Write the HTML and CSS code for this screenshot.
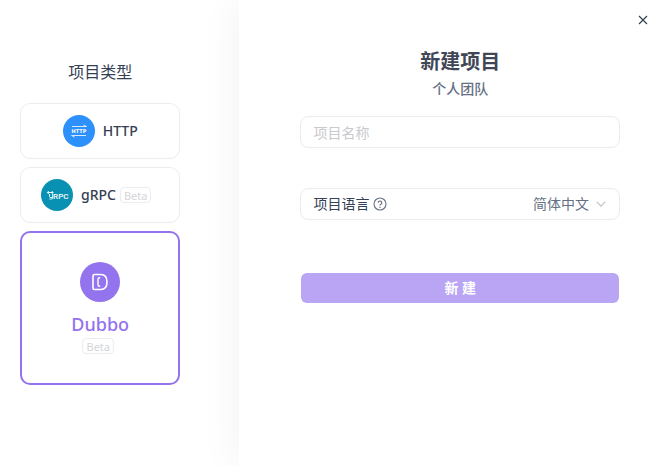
FILE: index.html
```html
<!DOCTYPE html>
<html lang="zh-CN">
<head>
    <meta charset="UTF-8">
    <meta name="viewport" content="width=device-width, initial-scale=1.0">
    <title>新建项目</title>
    <link rel="stylesheet" href="styles.css">
</head>
<body>

    <div class="dialog">
        <!-- Project types -->
        <aside class="sidebar">
            <h2 class="sidebar-title">项目类型</h2>

            <button type="button" class="type-card">
                <svg class="type-icon" viewBox="0 0 32 32" aria-hidden="true">
                    <circle cx="16" cy="16" r="16" fill="#2e90fa"/>
                    <path d="M9 11.500h14.500l-3-1.500M23 20.500H8.500l3 1.500" fill="none" stroke="#d5e9fe" stroke-width="1"/>
                    <text x="16" y="18" text-anchor="middle" class="icon-text">HTTP</text>
                </svg>
                <span class="type-name">HTTP</span>
            </button>

            <button type="button" class="type-card with-beta">
                <svg class="type-icon" viewBox="0 0 32 32" aria-hidden="true">
                    <circle cx="16" cy="16" r="16" fill="#0891b2"/>
                    <path d="M6.500 13.500h5.500M7.800 12L6.300 13.500 7.800 15M10.700 12l1.500 1.500-1.500 1.500M8.500 15v2.500q0 1 1.200 1h1.600M11.600 15v4q0 1-1.200 1H8.500" fill="none" stroke="#fff" stroke-width="0.900"/>
                    <text x="19.800" y="19.500" text-anchor="middle" class="icon-text icon-text-lg">RPC</text>
                </svg>
                <span class="type-name">gRPC <span class="beta">Beta</span></span>
            </button>

            <button type="button" class="type-card active" aria-pressed="true">
                <svg class="type-icon" viewBox="0 0 40 40" aria-hidden="true">
                    <circle cx="20" cy="20" r="20" fill="#9373ee"/>
                    <path d="M14.500 12.500h6.200c4.200 0 6.300 3 6.300 7.500s-2.100 7.500-6.300 7.500h-6.200q-1.500 0-1.500-1.500V14q0-1.500 1.500-1.500z" fill="none" stroke="#fff" stroke-width="1.600"/>
                    <path d="M20.200 15.700h-.5q-1.700 0-1.700 1.500v5.600q0 1.500 1.700 1.500h.5" fill="none" stroke="#fff" stroke-width="1.400"/>
                </svg>
                <span class="type-name">Dubbo</span>
                <span class="beta">Beta</span>
            </button>
        </aside>

        <!-- New project form -->
        <main class="content">
            <button type="button" class="close-btn" aria-label="关闭">
                <svg width="10" height="10" viewBox="0 0 10 10" aria-hidden="true">
                    <path d="M1 1l8 8M9 1L1 9" fill="none" stroke="#344054" stroke-width="1.200"/>
                </svg>
            </button>

            <form class="project-form">
                <h1 class="form-title">新建项目</h1>
                <p class="team-name">个人团队</p>

                <input type="text" class="field name-input" placeholder="项目名称" aria-label="项目名称">

                <div class="field language-field">
                    <label for="language">项目语言</label>
                    <svg class="help-icon" viewBox="0 0 14 14" aria-hidden="true">
                        <circle cx="7" cy="7" r="6" fill="none" stroke="#667085" stroke-width="1.100"/>
                        <path d="M5.200 5.700a1.800 1.700 0 1 1 2.700 1.500q-.9.500-.9 1.300" fill="none" stroke="#667085" stroke-width="1.100"/>
                        <circle cx="7" cy="10.200" r=".7" fill="#667085"/>
                    </svg>
                    <select id="language" class="language-select">
                        <option>简体中文</option>
                    </select>
                    <svg class="arrow-icon" viewBox="0 0 10 10" aria-hidden="true">
                        <path d="M.8 2.800L5 7.200l4.200-4.400" fill="none" stroke="#c0c2c7" stroke-width="1.200"/>
                    </svg>
                </div>

                <button type="button" class="submit-btn">新 建</button>
            </form>
        </main>
    </div>

</body>
</html>
```

FILE: styles.css
```css
/* General Styling */
* {
    box-sizing: border-box;
}

body {
    margin: 0;
    font-family: "Noto Sans", "Noto Sans CJK SC", sans-serif;
    font-size: 14px;
    line-height: 22px;
    color: #344054;
    background: #fff;
}

button, input, select {
    font: inherit;
    color: inherit;
}

h1, h2, p {
    margin: 0;
}

.dialog {
    display: flex;
    min-height: 100vh;
    overflow: hidden;
}

/* Sidebar */
.sidebar {
    flex: 0 0 239px;
    display: flex;
    flex-direction: column;
    gap: 8px;
    padding: 60px 59px 20px 20px;
}

.sidebar-title {
    margin-bottom: 11px;
    font-size: 16px;
    font-weight: 400;
    line-height: 24px;
    text-align: center;
}

.type-card {
    display: flex;
    align-items: center;
    justify-content: center;
    gap: 8px;
    height: 56px;
    padding: 0 20px;
    background: #fff;
    border: 1px solid #eaecf0;
    border-radius: 10px;
    cursor: pointer;
}

.type-card.with-beta {
    padding-right: 24px;
}

.type-icon {
    flex: none;
    width: 32px;
    height: 32px;
}

.type-name {
    display: flex;
    align-items: center;
    gap: 4px;
    font-weight: 500;
}

.beta {
    height: 16px;
    margin-right: 4px;
    padding: 0 3px;
    font-size: 11px;
    font-weight: 400;
    line-height: 15px;
    color: #d4d5d8;
    border: 1px solid #eaecf0;
    border-radius: 4px;
}

/* Selected card */
.type-card.active {
    flex-direction: column;
    gap: 0;
    height: 154px;
    border: 2px solid #9373ee;
}

.active .type-icon {
    width: 40px;
    height: 40px;
}

.active .type-name {
    margin-top: 8px;
    font-size: 18px;
    line-height: 28px;
    color: #9373ee;
}

.icon-text {
    font-family: "DejaVu Sans", sans-serif;
    font-size: 5px;
    font-weight: 700;
    fill: #fff;
}

.icon-text-lg {
    font-family: Roboto, sans-serif;
    font-size: 8px;
    font-weight: 500;
}

/* Right Side */
.content {
    position: relative;
    flex: 1;
    padding: 47px 49px 20px 61px;
    background: #fff;
    box-shadow: 0 0 40px rgba(0, 0, 0, 0.06);
}

.close-btn {
    position: absolute;
    top: 12px;
    right: 18px;
    display: flex;
    align-items: center;
    justify-content: center;
    width: 16px;
    height: 16px;
    padding: 0;
    background: none;
    border: none;
    cursor: pointer;
}

.project-form {
    display: flex;
    flex-direction: column;
}

.form-title {
    font-size: 20px;
    font-weight: 700;
    line-height: 30px;
    text-align: center;
    color: #3f4756;
}

.team-name {
    margin: 1px 0 16px;
    font-weight: 500;
    text-align: center;
    color: #667085;
}

.field {
    width: 100%;
    height: 32px;
    padding: 0 12px;
    background: #fff;
    border: 1px solid #eaecf0;
    border-radius: 8px;
}

.name-input {
    margin-bottom: 40px;
}

.name-input::placeholder {
    color: #c8c9cc;
}

.language-field {
    display: flex;
    align-items: center;
    margin-bottom: 53px;
}

.help-icon {
    width: 14px;
    height: 14px;
    margin-left: 4px;
}

.language-select {
    flex: 1;
    padding: 0;
    text-align-last: right;
    color: #667085;
    background: none;
    border: none;
    appearance: none;
}

.arrow-icon {
    width: 10px;
    height: 10px;
    margin: 0 1px 0 7px;
}

.submit-btn {
    height: 30px;
    margin: 0 1px;
    padding: 0;
    font-weight: 700;
    color: #fff;
    background: #b9a5f4;
    border: none;
    border-radius: 6px;
    cursor: pointer;
}
```
